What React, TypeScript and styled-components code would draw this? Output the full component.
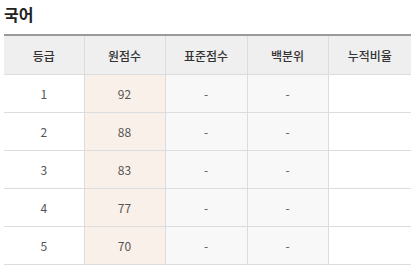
import styled, { createGlobalStyle } from 'styled-components'

const GlobalStyle = createGlobalStyle`
  body {
    margin: 0;
    background: #fff;
    font-family: "Noto Sans CJK KR", "Noto Sans", sans-serif;
  }
`

const Wrap = styled.div`
  padding: 0 5px 0 4px;
`

const Title = styled.h3`
  margin: 0;
  height: 34px;
  padding-top: 2px;
  box-sizing: border-box;
  font-size: 16px;
  font-weight: 700;
  color: #222;
  line-height: 24px;
`

const Table = styled.table`
  width: 407px;
  border-collapse: collapse;
  table-layout: fixed;
  border-top: 2px solid #9a9a9a;
`

const Th = styled.th`
  height: 38px;
  padding: 0;
  background: #efefef;
  font-size: 12px;
  font-weight: 500;
  color: #333;
  border-bottom: 1px solid #dcdcdc;
  border-left: 1px solid #dcdcdc;
  &:first-child {
    border-left: none;
  }
`

const Td = styled.td<{ $bg?: string }>`
  height: 37px;
  padding: 0;
  text-align: center;
  font-size: 12px;
  color: #555;
  background: ${p => p.$bg || '#fff'};
  border-bottom: 1px solid #dcdcdc;
  border-left: 1px solid #dcdcdc;
  &:first-child {
    border-left: none;
  }
`

const rows = [
  { grade: 1, raw: 92 },
  { grade: 2, raw: 88 },
  { grade: 3, raw: 83 },
  { grade: 4, raw: 77 },
  { grade: 5, raw: 70 },
]

export default function App() {
  return (
    <Wrap>
      <GlobalStyle />
      <Title>국어</Title>
      <Table>
        <colgroup>
          <col style={{ width: 80 }} />
          <col style={{ width: 81 }} />
          <col style={{ width: 82 }} />
          <col style={{ width: 81 }} />
          <col style={{ width: 83 }} />
        </colgroup>
        <thead>
          <tr>
            <Th>등급</Th>
            <Th>원점수</Th>
            <Th>표준점수</Th>
            <Th>백분위</Th>
            <Th>누적비율</Th>
          </tr>
        </thead>
        <tbody>
          {rows.map(r => (
            <tr key={r.grade}>
              <Td>{r.grade}</Td>
              <Td $bg="#f9f0ea">{r.raw}</Td>
              <Td $bg="#f8f8f8">-</Td>
              <Td $bg="#f8f8f8">-</Td>
              <Td></Td>
            </tr>
          ))}
        </tbody>
      </Table>
    </Wrap>
  )
}
